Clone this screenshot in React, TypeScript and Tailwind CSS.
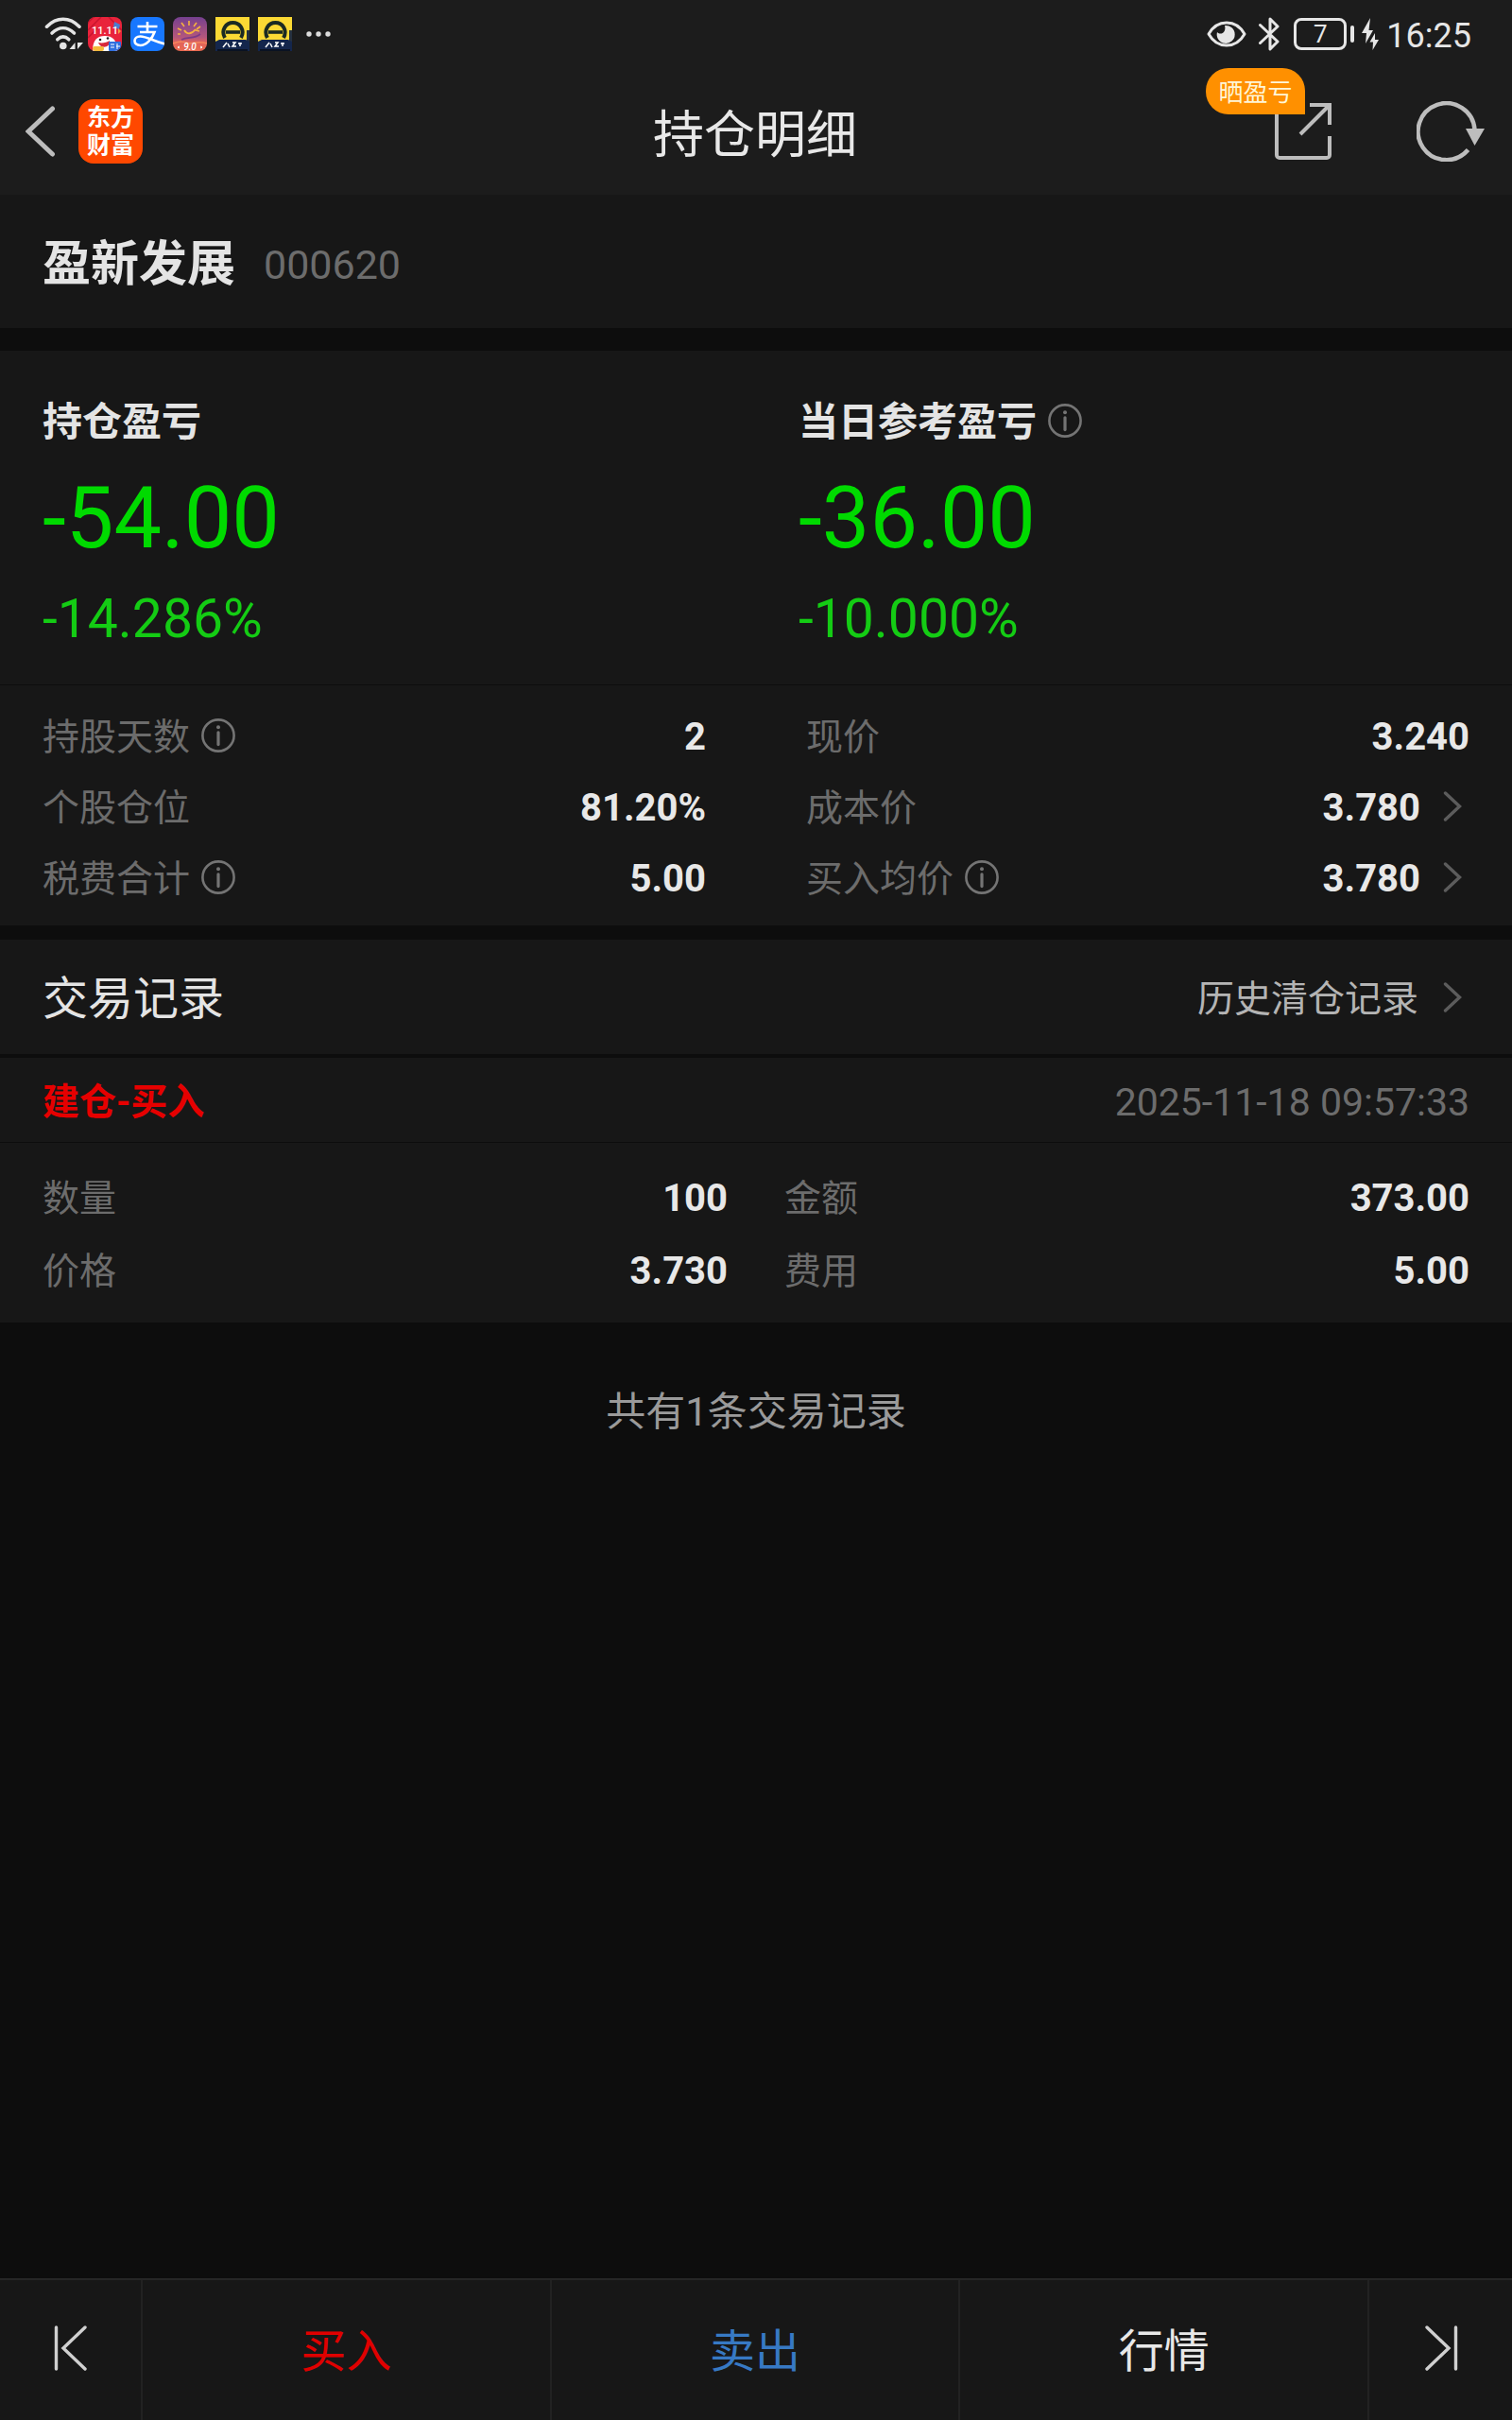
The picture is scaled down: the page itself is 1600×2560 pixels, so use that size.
import React from 'react';
import clsx from 'clsx';

type Item = {
  label: string;
  value: string;
  info?: boolean;
  link?: boolean;
};

const positionItems: Item[] = [
  { label: '持股天数', value: '2', info: true },
  { label: '现价', value: '3.240' },
  { label: '个股仓位', value: '81.20%' },
  { label: '成本价', value: '3.780', link: true },
  { label: '税费合计', value: '5.00', info: true },
  { label: '买入均价', value: '3.780', info: true, link: true },
];

const tradeItems: Item[] = [
  { label: '数量', value: '100' },
  { label: '金额', value: '373.00' },
  { label: '价格', value: '3.730' },
  { label: '费用', value: '5.00' },
];

const InfoIcon: React.FC = () => (
  <svg className="w-9 h-9 mb-1 shrink-0" viewBox="0 0 36 36" fill="none" stroke="#747474" strokeWidth="2.6" strokeLinecap="round">
    <circle cx="18" cy="18" r="16.6" />
    <circle cx="18" cy="9.2" r="2" fill="#747474" stroke="none" />
    <path d="M18 14.8v12.8" strokeWidth="3.2" />
  </svg>
);

const ChevronIcon: React.FC = () => (
  <svg className="w-5 h-8 mb-1 shrink-0" viewBox="0 0 20 32" fill="none" stroke="#5c5c5c" strokeWidth="3.4" strokeLinecap="round">
    <path d="M2.5 2 17.5 16 2.5 30" />
  </svg>
);

const WifiIcon: React.FC = () => (
  <svg className="w-[42px] h-9" viewBox="0 0 42 36" fill="none" stroke="#e4e4e4" strokeWidth="3.6" strokeLinecap="round">
    <path d="M2.5 10.2C13 -.4 26.5 -.4 37 10.2" />
    <path d="M8 17c7.4-7 16-7 23.5 0" />
    <path d="M13.8 23.8c3.8-3.6 8.2-3.6 12 0" />
    <circle cx="19.8" cy="30.5" r="3.8" fill="#e4e4e4" stroke="none" />
    <path d="M32.5 27v7h-6zM35 27h6l-6 7z" fill="#e4e4e4" stroke="none" />
  </svg>
);

const SaleAppIcon: React.FC = () => (
  <svg className="w-9 h-9 rounded-lg" viewBox="0 0 36 36">
    <rect width="36" height="36" fill="#e9233b" />
    <path d="M0 6 6 0M0 14 14 0M0 22 10 12M22 0l14 14" stroke="#c9152f" strokeWidth="1.5" />
    <path d="M28 5l6 3-1 5-6-2z" fill="#4a7dd0" />
    <path d="M32 12l3 3-3 3z" fill="#f29a3a" />
    <text x="18" y="18" textAnchor="middle" fontSize="11" fontWeight="500" fill="#fff">11.11</text>
    <path d="M5 36C5 24 10 20 18 20s13 4 13 16z" fill="#fff" />
    <path d="M11 27c4 1 9 0 12-2 1 8-10 9-12 2z" fill="#d8293b" />
    <circle cx="13" cy="24" r="1.3" fill="#222" />
    <circle cx="21" cy="22.5" r="1.3" fill="#222" />
    <rect x="5" y="31" width="12" height="5" rx="2" fill="#f4ba3c" />
    <rect x="22" y="26" width="13" height="10" rx="1" fill="#2f6fe0" />
    <path d="M24 29h4M24 32h4M31 28v6M30 31h4" stroke="#fff" strokeWidth="1" />
  </svg>
);

const AlipayIcon: React.FC = () => (
  <svg className="w-9 h-9 rounded-lg" viewBox="0 0 36 36" fill="none" stroke="#fff" strokeWidth="2.6">
    <rect width="36" height="36" fill="#1777ff" stroke="none" />
    <path d="M7.500 10h21M18 5v11M10 16h15.500C23 23 17 30 10.500 30 2.500 30 2.500 20.500 10.500 20.500c7 0 14 5 26 8" />
  </svg>
);

const SunAppIcon: React.FC = () => (
  <svg className="w-9 h-9 rounded-lg" viewBox="0 0 36 36" fill="none">
    <defs>
      <linearGradient id="sunset" x1="0" y1="0" x2="0" y2="1">
        <stop offset="0" stopColor="#75408f" />
        <stop offset="0.6" stopColor="#b4577c" />
        <stop offset="0.75" stopColor="#e2635a" />
        <stop offset="1" stopColor="#ea6a50" />
      </linearGradient>
    </defs>
    <rect width="36" height="36" fill="url(#sunset)" />
    <path d="M17 9V4M12 10 9 6M9 14l-4-2M8 18H5M22 10l3-4M25 13l4-3" stroke="#f6b23f" strokeWidth="1.6" />
    <path d="M12 14c3 5 8 4 12-1M24 14l4 1" stroke="#f6b23f" strokeWidth="1.8" />
    <path d="M9 24c7-4 13 0 20-6" stroke="#7b3b86" strokeWidth="1.8" />
    <path d="M0 28c8-3 12-2 17 0 6 0 10-3 19 0" stroke="#f4875d" strokeWidth="1.5" />
    <text x="18" y="35" textAnchor="middle" fontSize="10" fontStyle="italic" fontWeight="500" fill="#fff">9.0</text>
    <path d="M7 31l-2 1 2 1M29 31l2 1-2 1" stroke="#fff" strokeWidth="1" />
  </svg>
);

const DriveAppIcon: React.FC = () => (
  <svg className="w-9 h-9" viewBox="0 0 36 36" fill="none">
    <rect width="36" height="36" fill="#fbd934" />
    <path d="M33 14h3v12h-3z" fill="#26313f" />
    <path d="M0 26 4 24h28l4 2v10H0z" fill="#14264c" />
    <path d="M10 22C5.500 14 11 6 18.500 6S31.500 14 27 22" stroke="#1b2a23" strokeWidth="4" />
    <path d="M11 16h15" stroke="#1b2a23" strokeWidth="3.6" />
    <path d="M12 27 8 32M13 28l2 4M18 27h3l-3 4h4M24 28h4M26 27v4" stroke="#fff" strokeWidth="1.5" />
    <path d="M2 35h32" stroke="#0a1223" strokeWidth="2" />
  </svg>
);

const StatusBar: React.FC = () => (
  <div className="flex items-center justify-between h-[72px] pl-[47px] pr-[43px]">
    <div className="flex items-center gap-[9px]">
      <div className="flex items-center gap-1">
        <WifiIcon />
        <SaleAppIcon />
      </div>
      <AlipayIcon />
      <SunAppIcon />
      <DriveAppIcon />
      <DriveAppIcon />
      <svg className="w-[26px] h-2 ml-1.5" viewBox="0 0 26 8" fill="#dcdcdc">
        <circle cx="3" cy="4" r="2.7" />
        <circle cx="13" cy="4" r="2.7" />
        <circle cx="23" cy="4" r="2.7" />
      </svg>
    </div>

    <div className="flex items-center gap-2">
      <svg className="w-[42px] h-7" viewBox="0 0 42 28" fill="none" stroke="#e6e6e6" strokeWidth="3">
        <path d="M2 14C11-2 31-2 40 14 31 30 11 30 2 14z" strokeLinejoin="round" />
        <path d="M19 5a9.500 9.500 0 1 1-8 7c4 4 10 0 8-7z" fill="#e6e6e6" stroke="none" />
      </svg>
      <svg className="w-6 h-9 ml-1" viewBox="0 0 24 36" fill="none" stroke="#e6e6e6" strokeWidth="3" strokeLinecap="round" strokeLinejoin="round">
        <path d="M2.500 8.500 21 26l-8 8V2l8 8L2.500 27.500" />
      </svg>
      <div className="flex items-center gap-1 ml-1.5">
        <div className="flex items-center justify-center w-14 h-[34px] border-3 border-[#e6e6e6] rounded-lg text-[26px] leading-none text-[#e6e6e6]">7</div>
        <div className="w-1 h-[18px] rounded-sm bg-[#e6e6e6]" />
      </div>
      <svg className="w-[18px] h-[34px]" viewBox="0 0 18 34" fill="#e6e6e6">
        <path d="M9 0 0 16h5L4 27l8-14H7.500zM14 16 8.500 25.500h3.500L11.500 34 18 23h-4z" />
      </svg>
      <span className="pt-1 text-[36px] leading-[40px] text-[#e6e6e6]">16:25</span>
    </div>
  </div>
);

const NavBar: React.FC = () => (
  <div className="flex items-center h-[134px] pl-[27px] pr-[29px]">
    <div className="flex flex-1 items-center gap-6">
      <button aria-label="返回">
        <svg className="w-8 h-[54px]" viewBox="0 0 32 54" fill="none" stroke="#bdbdbd" strokeWidth="5" strokeLinecap="round">
          <path d="M28.500 3 3 27l25.500 24" />
        </svg>
      </button>
      <div className="flex items-center justify-center w-[68px] h-[68px] rounded-2xl bg-[#ff4800] text-white text-[25px] leading-[29px] font-bold text-center">
        东方
        <br />
        财富
      </div>
    </div>
    <h1 className="pt-2.5 text-[54px] leading-[64px] text-[#e8e8e8]">持仓明细</h1>
    <div className="flex flex-1 items-center justify-end gap-[90px]">
      <button className="relative" aria-label="分享">
        <svg className="w-[60px] h-[60px]" viewBox="0 0 60 60" fill="none" stroke="#bdbdbd" strokeWidth="4">
          <path d="M2 10v45a3 3 0 0 0 3 3h50a3 3 0 0 0 3-3V35M37 2h21v21M57 3 27 33" />
        </svg>
        <span className="absolute right-[28px] bottom-[48px] w-[105px] h-[49px] rounded-[24px] rounded-br-none bg-[#ff9000] text-[26px] leading-[52px] text-[#fff6d8] whitespace-nowrap">
          晒盈亏
        </span>
      </button>
      <button aria-label="刷新">
        <svg className="w-[72px] h-[64px]" viewBox="0 0 72 64" fill="none" stroke="#bdbdbd" strokeWidth="4.5">
          <path d="M54.500 51.500A30 30 0 1 1 61.500 30" />
          <path d="M52 29h20L61.500 47z" fill="#bdbdbd" stroke="none" />
        </svg>
      </button>
    </div>
  </div>
);

const Profit: React.FC<{ title: string; amount: string; rate: string; info?: boolean }> = ({ title, amount, rate, info }) => (
  <div className="flex-1 pl-[45px]">
    <div className="flex items-center gap-3 h-[52px]">
      <h2 className="text-[42px] leading-[52px] font-bold text-[#e4e4e4]">{title}</h2>
      {info && <InfoIcon />}
    </div>
    <p className="mt-6 text-[90px] leading-[104px] text-[#00da00]">{amount}</p>
    <p className="mt-5 text-[57px] leading-[68px] text-[#14cc14]">{rate}</p>
  </div>
);

const ItemRow: React.FC<{ item: Item; className: string }> = ({ item, className }) => (
  <div className={clsx('flex items-center justify-between', className)}>
    <dt className="flex items-center gap-3 text-[39px] leading-[48px] text-[#6c6c6c]">
      {item.label}
      {item.info && <InfoIcon />}
    </dt>
    <dd className="flex items-center gap-6 text-[40px] leading-[50px] font-bold text-[#e8e8e8]">
      {item.value}
      {item.link && (
        <button className="flex pr-2" aria-label={`${item.label}详情`}>
          <ChevronIcon />
        </button>
      )}
    </dd>
  </div>
);

const App: React.FC = () => {
  return (
    <div className="flex flex-col min-h-screen bg-[#0d0d0d] font-['Roboto','Noto_Sans_CJK_SC',sans-serif]">
      <header className="bg-[#1c1c1c]">
        <StatusBar />
        <NavBar />
      </header>

      <main className="flex-1">
        {/* Stock */}
        <section className="flex items-center gap-[30px] h-[141px] pt-1.5 px-[45px] bg-[#171717]">
          <h2 className="text-[51px] leading-[60px] font-bold text-[#e4e4e4]">盈新发展</h2>
          <span className="text-[43px] leading-[60px] text-[#6c6c6c]">000620</span>
        </section>

        {/* Profit and position */}
        <section className="mt-6 bg-[#171717]">
          <div className="flex pt-[50px] pb-[35px] border-b border-[#0d0d0d]">
            <Profit title="持仓盈亏" amount="-54.00" rate="-14.286%" />
            <Profit title="当日参考盈亏" amount="-36.00" rate="-10.000%" info />
          </div>
          <dl className="grid grid-cols-2 gap-x-[106px] px-[45px] pt-[17px] pb-3">
            {positionItems.map(item => (
              <ItemRow key={item.label} item={item} className="h-[75px]" />
            ))}
          </dl>
        </section>

        {/* Trade records */}
        <section className="mt-[15px]">
          <div className="flex items-center justify-between h-[121px] pt-1 pl-[45px] pr-[53px] bg-[#171717]">
            <h2 className="text-[48px] leading-[60px] text-[#e4e4e4]">交易记录</h2>
            <a href="#history" className="flex items-center gap-[26px] text-[39px] leading-[48px] text-[#b4b4b4]">
              历史清仓记录
              <ChevronIcon />
            </a>
          </div>
          <article className="mt-1 bg-[#171717]">
            <div className="flex items-center justify-between h-[90px] pt-1 px-[45px] border-b border-[#0d0d0d]">
              <h3 className="text-[39px] leading-[48px] font-bold text-[#e60000]">建仓-买入</h3>
              <time className="text-[41px] leading-[48px] text-[#6c6c6c]">2025-11-18 09:57:33</time>
            </div>
            <dl className="grid grid-cols-2 gap-x-[60px] px-[45px] pt-5 pb-4">
              {tradeItems.map(item => (
                <ItemRow key={item.label} item={item} className="h-[77px]" />
              ))}
            </dl>
          </article>
        </section>

        <p className="mt-16 text-center text-[42px] leading-[62px] text-[#9a9a9a]">共有1条交易记录</p>
      </main>

      <footer className="flex h-[150px] border-t-2 border-[#262626] divide-x-2 divide-[#222222] bg-[#171717] text-[48px] leading-[60px]">
        <button className="flex items-center justify-center w-[151px] pb-1" aria-label="上一个">
          <svg className="w-9 h-12" viewBox="0 0 36 48" fill="none" stroke="#d0d0d0" strokeWidth="3.4" strokeLinecap="round">
            <path d="M2.500 2v44M33 2 10 24l23 22" />
          </svg>
        </button>
        <button className="flex-1 pt-1 text-[#e00000]">买入</button>
        <button className="flex-1 pt-1 text-[#3779c4]">卖出</button>
        <button className="flex-1 pt-1 text-[#e8e8e8]">行情</button>
        <button className="flex items-center justify-center w-[151px] pb-1" aria-label="下一个">
          <svg className="w-9 h-12" viewBox="0 0 36 48" fill="none" stroke="#d0d0d0" strokeWidth="3.4" strokeLinecap="round">
            <path d="M33.500 2v44M3 2l23 22L3 46" />
          </svg>
        </button>
      </footer>
    </div>
  );
};

export default App;
